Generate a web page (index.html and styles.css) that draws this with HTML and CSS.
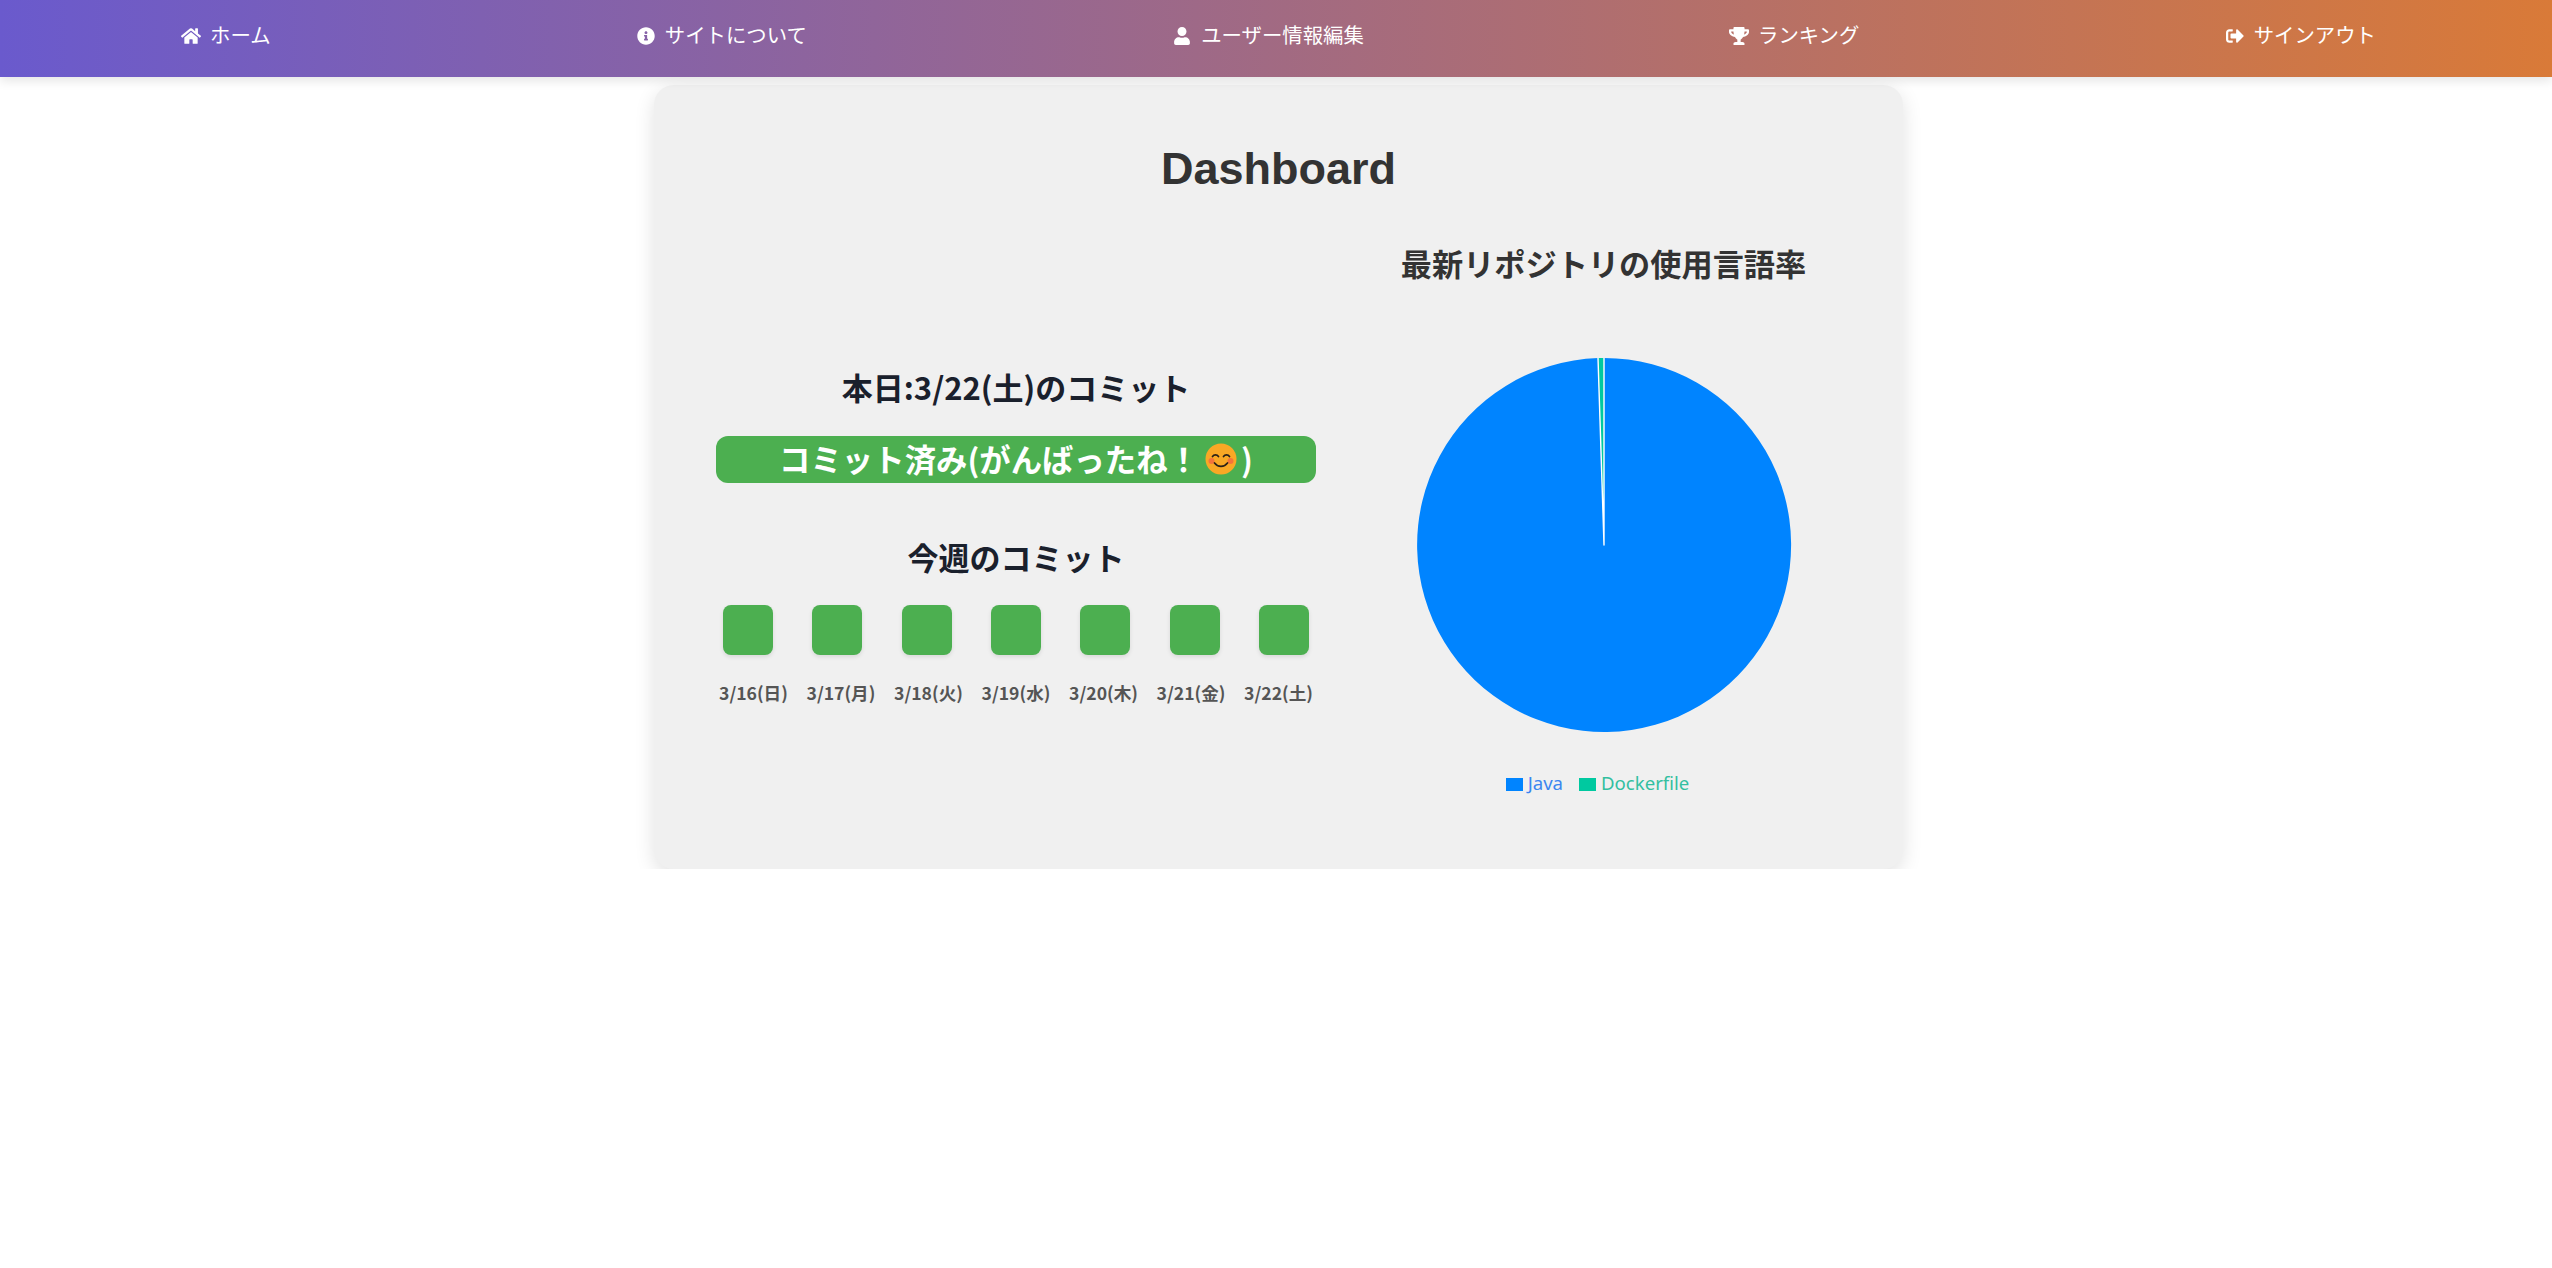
FILE: index.html
```html
<!DOCTYPE html>
<html lang="ja">
<head>
<meta charset="utf-8">
<title>Dashboard</title>
<link rel="stylesheet" href="styles.css">
</head>
<body>
<nav class="nav">
  <a class="nav-item"><svg class="nav-icon" viewBox="0 0 576 512"><path d="M280.37 148.26L96 300.11V464a16 16 0 0 0 16 16l112.06-.29a16 16 0 0 0 15.92-16V368a16 16 0 0 1 16-16h64a16 16 0 0 1 16 16v95.64a16 16 0 0 0 16 16.05L464 480a16 16 0 0 0 16-16V300L295.67 148.26a12.19 12.19 0 0 0-15.3 0zM571.6 251.47L488 182.56V44.05a12 12 0 0 0-12-12h-56a12 12 0 0 0-12 12v72.61L318.47 43a48 48 0 0 0-61 0L4.34 251.47a12 12 0 0 0-1.6 16.9l25.5 31A12 12 0 0 0 45.15 301l235.22-193.74a12.19 12.19 0 0 1 15.3 0L530.9 301a12 12 0 0 0 16.9-1.6l25.5-31a12 12 0 0 0-1.7-16.93z"/></svg>ホーム</a>
  <a class="nav-item"><svg class="nav-icon" viewBox="0 0 512 512"><path d="M256 8C119.043 8 8 119.083 8 256c0 136.997 111.043 248 248 248s248-111.003 248-248C504 119.083 392.957 8 256 8zm0 110c23.196 0 42 18.804 42 42s-18.804 42-42 42-42-18.804-42-42 18.804-42 42-42zm56 254c0 6.627-5.373 12-12 12h-88c-6.627 0-12-5.373-12-12v-24c0-6.627 5.373-12 12-12h12v-64h-12c-6.627 0-12-5.373-12-12v-24c0-6.627 5.373-12 12-12h64c6.627 0 12 5.373 12 12v100h12c6.627 0 12 5.373 12 12v24z"/></svg>サイトについて</a>
  <a class="nav-item"><svg class="nav-icon" viewBox="0 0 448 512"><path d="M224 256c70.7 0 128-57.3 128-128S294.7 0 224 0 96 57.3 96 128s57.3 128 128 128zm89.6 32h-16.7c-22.2 10.2-46.9 16-72.9 16s-50.6-5.8-72.9-16h-16.7C60.2 288 0 348.2 0 422.4V464c0 26.5 21.5 48 48 48h352c26.5 0 48-21.5 48-48v-41.6c0-74.2-60.2-134.4-134.4-134.4z"/></svg>ユーザー情報編集</a>
  <a class="nav-item"><svg class="nav-icon" viewBox="0 0 576 512"><path d="M552 64H448V24c0-13.3-10.7-24-24-24H152c-13.3 0-24 10.7-24 24v40H24C10.7 64 0 74.7 0 88v56c0 35.7 22.5 72.4 61.9 100.7 31.5 22.7 69.8 37.1 110 41.7C203.3 338.5 240 360 240 360v72h-48c-35.3 0-64 20.7-64 56v12c0 6.6 5.4 12 12 12h296c6.6 0 12-5.4 12-12v-12c0-35.3-28.7-56-64-56h-48v-72s36.7-21.5 68.1-73.6c40.3-4.6 78.6-19 110-41.7 39.3-28.3 61.9-65 61.9-100.7V88c0-13.3-10.7-24-24-24zM99.3 192.8C74.9 175.2 64 155.6 64 144v-16h64.2c1 32.6 5.8 61.2 12.8 86.2-15.1-5.2-29.2-12.4-41.7-21.4zM512 144c0 16.1-17.7 36.1-35.3 48.8-12.5 9-26.7 16.2-41.8 21.4 7-25 11.8-53.6 12.8-86.2H512v16z"/></svg>ランキング</a>
  <a class="nav-item"><svg class="nav-icon" viewBox="0 0 512 512"><path d="M497 273L329 441c-15 15-41 4.5-41-17v-96H152c-13.3 0-24-10.7-24-24v-96c0-13.3 10.7-24 24-24h136V88c0-21.4 25.9-32 41-17l168 168c9.3 9.4 9.3 24.6 0 34zM192 436v-40c0-6.6-5.4-12-12-12H96c-17.7 0-32-14.3-32-32V160c0-17.7 14.3-32 32-32h84c6.6 0 12-5.4 12-12V76c0-6.6-5.4-12-12-12H96c-53 0-96 43-96 96v192c0 53 43 96 96 96h84c6.6 0 12-5.4 12-12z"/></svg>サインアウト</a>
</nav>
<main class="page">
  <section class="card">
    <h1 class="title">Dashboard</h1>
    <div class="columns">
      <div class="commits">
        <h2 class="commit-heading">本日:3/22(土)のコミット</h2>
        <p class="status">コミット済み(がんばったね！<svg class="emoji" viewBox="0 0 32 32"><circle cx="16" cy="16" r="15.5" fill="#f9a825"/><circle cx="6.5" cy="18" r="3" fill="#f4743b"/><circle cx="25.5" cy="18" r="3" fill="#f4743b"/><path d="M7.5 13.5a3.6 3.6 0 0 1 6 0M18.5 13.5a3.6 3.6 0 0 1 6 0M9.5 20a8 8 0 0 0 13 0" fill="none" stroke="#2b2118" stroke-width="1.7" stroke-linecap="round"/></svg>)</p>
        <h2 class="week-heading">今週のコミット</h2>
        <div class="squares">
          <span class="square"></span><span class="square"></span><span class="square"></span><span class="square"></span><span class="square"></span><span class="square"></span><span class="square"></span>
        </div>
        <div class="dates">
          <span>3/16(日)</span><span>3/17(月)</span><span>3/18(火)</span><span>3/19(水)</span><span>3/20(木)</span><span>3/21(金)</span><span>3/22(土)</span>
        </div>
      </div>
      <div class="languages">
        <h2 class="lang-heading">最新リポジトリの使用言語率</h2>
        <svg class="pie" viewBox="0 0 400 400">
          <path d="M200 200L200 13A187 187 0 1 1 194 13.1Z" fill="#0084ff"/>
          <path d="M200 200L194 13.1A187 187 0 0 1 200 13Z" fill="#00c9a0"/>
          <path d="M194 13.1L200 200L200 13" fill="none" stroke="#fff" stroke-width="1.4" stroke-linejoin="round"/>
        </svg>
        <div class="legend">
          <span class="legend-item java"><i class="swatch"></i>Java</span>
          <span class="legend-item docker"><i class="swatch"></i>Dockerfile</span>
        </div>
      </div>
    </div>
  </section>
</main>
</body>
</html>
```

FILE: styles.css
```css
* { box-sizing: border-box; }
html, body { margin: 0; padding: 0; background: #fff; }
body { font-family: "Liberation Sans", "Noto Sans CJK JP", sans-serif; color: #333; }

.nav {
  display: flex;
  justify-content: space-between;
  align-items: center;
  height: 77px;
  padding: 0 176px 5px 181px;
  background: linear-gradient(90deg, #6a5acd, #d97a38);
  box-shadow: 0 4px 10px rgba(0, 0, 0, 0.1);
  position: relative;
}
.nav-item {
  display: flex;
  align-items: center;
  gap: 9px;
  color: #fff;
  font-size: 20.4px;
  line-height: 30px;
}
.nav-icon { width: 20px; height: 18px; fill: #fff; flex: none; }

.page { display: flex; justify-content: center; padding: 8px 0 0 5px; }
.card {
  width: 1249px;
  height: 784px;
  padding: 0 62px;
  background: #f0f0f0;
  border-radius: 20px;
  box-shadow: 0 6px 20px rgba(0, 0, 0, 0.12);
}
.title {
  margin: 0;
  padding: 56px 0 0;
  font-size: 45px;
  line-height: 56px;
  font-weight: 700;
  text-align: center;
  color: #333;
}
.columns { display: flex; gap: 50px; align-items: flex-start; margin-top: 47px; }

.commits { width: 600px; flex: none; margin-top: 121px; text-align: center; font-family: "Noto Sans CJK JP", sans-serif; }
.commit-heading, .week-heading {
  margin: 0;
  font-size: 31px;
  line-height: 44px;
  font-weight: 700;
  color: #1a202c;
}
.status {
  display: flex;
  justify-content: center;
  align-items: center;
  height: 47px;
  margin: 27px 0 0;
  padding-bottom: 2px;
  background: #4caf50;
  border-radius: 12px;
  color: #fff;
  font-size: 31.4px;
  font-weight: 700;
}
.emoji { width: 32px; height: 32px; margin: 0 4px 0 6px; }
.week-heading { margin-top: 52px; }
.squares { display: flex; justify-content: space-between; padding: 0 7px; margin-top: 26px; }
.square {
  width: 50px;
  height: 50px;
  background: #4caf50;
  border-radius: 8px;
  box-shadow: 0 2px 4px rgba(0, 0, 0, 0.1);
}
.dates { display: flex; justify-content: space-between; padding: 0 3px; margin-top: 25px; }
.dates span { font-size: 17.6px; line-height: 26px; font-weight: 700; color: #555; }

.languages { flex: 1; display: flex; flex-direction: column; align-items: center; }
.lang-heading {
  margin: 0;
  font-size: 31.2px;
  line-height: 44px;
  font-weight: 700;
  color: #333;
}
.pie { width: 400px; height: 400px; margin-top: 57px; display: block; }
.legend {
  display: flex;
  gap: 16px;
  margin-top: 24px;
  padding-right: 12px;
  font-family: "Noto Sans", sans-serif;
  font-size: 18.6px;
  line-height: 28px;
}
.legend-item { display: flex; align-items: center; gap: 5px; }
.swatch { width: 17px; height: 13px; margin-top: 2px; display: block; }
.java { color: #3b86f0; }
.java .swatch { background: #0084ff; }
.docker { color: #33bfa0; }
.docker .swatch { background: #00c9a0; }
```
